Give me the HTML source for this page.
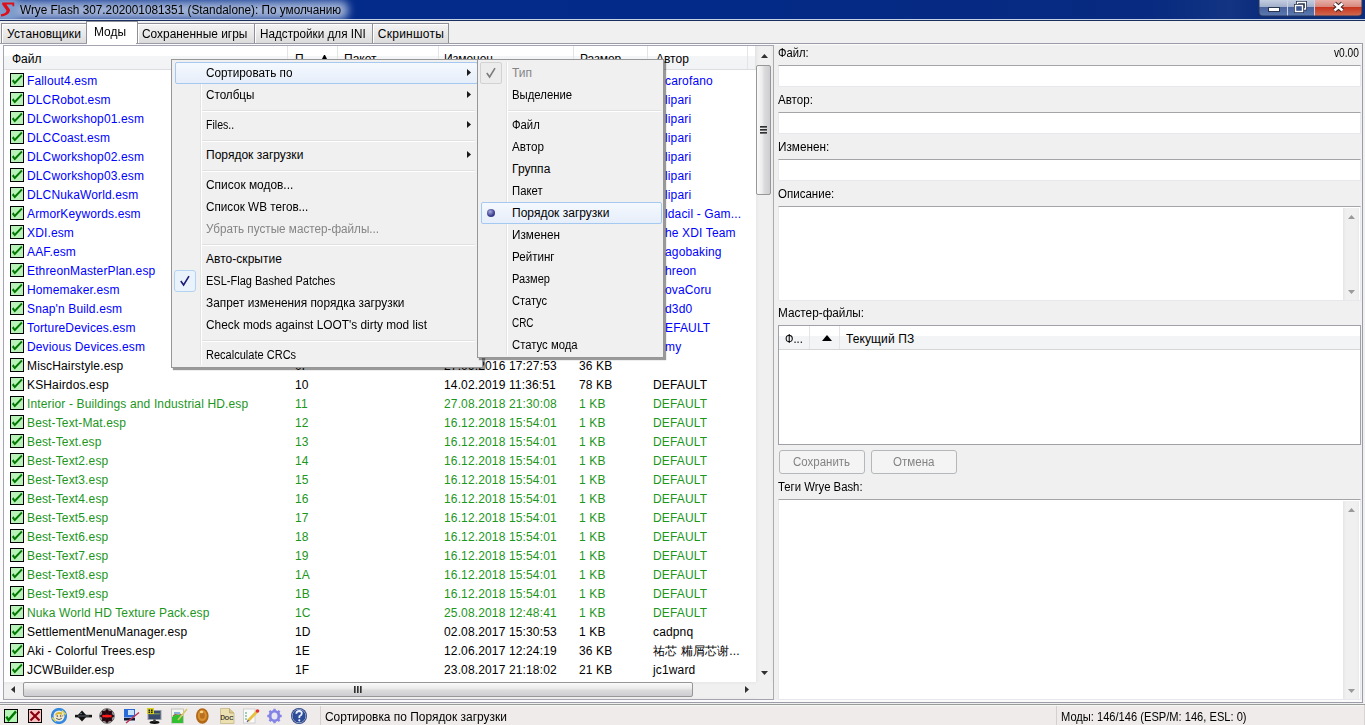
<!DOCTYPE html>
<html><head><meta charset="utf-8"><style>
*{box-sizing:border-box}
html,body{margin:0;padding:0}
body{width:1365px;height:725px;overflow:hidden;position:relative;background:#f0f0f0;font-family:"Liberation Sans",sans-serif;font-size:12px;color:#000}
.a{position:absolute}
.t{position:absolute;white-space:nowrap;line-height:15px}
.cb{position:absolute}
</style></head><body>

<div class="a" style="left:0;top:0;width:1365px;height:19px;overflow:hidden;background:linear-gradient(90deg,#042c8c 0,#032a88 700px,#082a80 1150px,#123482 1230px,#0c2c7c 1258px)">
<div class="a" style="left:-8px;top:0px;width:356px;height:20px;border-radius:8px;background:linear-gradient(180deg,#6a86c0 0,#a2b4d6 35%,#aabada 60%,#8098c8 100%);filter:blur(4px)"></div>
<div class="a" style="left:-6px;top:-2px;width:24px;height:22px;background:#7d9ccc;filter:blur(3px)"></div>
</div>
<div class="a" style="left:0;top:19px;width:1365px;height:1px;background:#c4d0e4"></div>
<div class="a" style="left:0;top:20px;width:1365px;height:1px;background:#1b2f5e"></div>
<div class="t" style="left:19.8px;top:3px;transform:scaleX(0.982);transform-origin:0 0;">Wrye Flash 307.202001081351 (Standalone): По умолчанию</div>
<svg class="a" style="left:0;top:0" width="18" height="18" viewBox="0 0 18 18"><path d="M2.2 2.6 H14.2 V6.2 H12.4 V4.6 H6.4 L9.9 9.4 C10.4 12.6 7.2 15.8 1.2 16.4 L0.8 14.2 C4.4 13.6 6.6 12.4 6.5 10.4 L2.2 4.6 Z" fill="#dc1018"/></svg>

<svg class="a" style="left:1258px;top:0" width="105" height="18" viewBox="0 0 105 18">
<defs>
<linearGradient id="gb" x1="0" y1="0" x2="0" y2="1"><stop offset="0" stop-color="#c4cee0"/><stop offset="0.42" stop-color="#a3b1cc"/><stop offset="0.45" stop-color="#4a629c"/><stop offset="1" stop-color="#5a78b0"/></linearGradient>
<linearGradient id="gr" x1="0" y1="0" x2="0" y2="1"><stop offset="0" stop-color="#e8b0a8"/><stop offset="0.42" stop-color="#d88a80"/><stop offset="0.45" stop-color="#c8321c"/><stop offset="1" stop-color="#d06850"/></linearGradient>
</defs>
<path d="M0.5 0 V12 Q0.5 16.5 5 16.5 H100 Q104.5 16.5 104.5 12 V0" fill="#26365a"/>
<path d="M1.5 0 V12 Q1.5 15.5 5 15.5 H29 V0Z" fill="url(#gb)"/>
<rect x="29" y="0" width="1" height="15.5" fill="#c8d2e4"/>
<rect x="30" y="0" width="26" height="15.5" fill="url(#gb)"/>
<rect x="56" y="0" width="1" height="15.5" fill="#c8d2e4"/>
<path d="M57 0 H103.5 V12 Q103.5 15.5 100 15.5 H57Z" fill="url(#gr)"/>
<rect x="10.5" y="7.5" width="11" height="4" fill="#fff" stroke="#2a3550" stroke-width="1"/>
<path d="M39.5 5 V2.5 H47.5 V9 H45" fill="none" stroke="#2a3550" stroke-width="3"/>
<path d="M39.5 5 V2.5 H47.5 V9 H45" fill="none" stroke="#fff" stroke-width="1.3"/>
<rect x="37.5" y="5.5" width="7" height="6" fill="#3c5490" stroke="#2a3550" stroke-width="3"/>
<rect x="37.5" y="5.5" width="7" height="6" fill="#3c5490" stroke="#fff" stroke-width="1.4"/>
<path d="M76.5 3.5 L84.5 10.5 M84.5 3.5 L76.5 10.5" stroke="#3a2020" stroke-width="4.4"/>
<path d="M76.5 3.5 L84.5 10.5 M84.5 3.5 L76.5 10.5" stroke="#fff" stroke-width="2.6"/>
</svg>
<div class="a" style="left:1px;top:23px;width:86px;height:21px;background:linear-gradient(180deg,#f4f4f4 0,#e8e8e8 50%,#dadada 100%);border:1px solid #8e8f98;border-bottom:none;box-shadow:inset 1px 1px 0 #fff"></div>
<div class="t" style="left:7.0px;top:27px;letter-spacing:0.08px;">Установщики</div>
<div class="a" style="left:86px;top:21px;width:52px;height:24px;background:#fff;border:1px solid #8e8f98;border-bottom:none"></div>
<div class="t" style="left:94.0px;top:25px;transform:scaleX(0.9937);transform-origin:0 0;">Моды</div>
<div class="a" style="left:137px;top:23px;width:118px;height:21px;background:linear-gradient(180deg,#f4f4f4 0,#e8e8e8 50%,#dadada 100%);border:1px solid #8e8f98;border-bottom:none;box-shadow:inset 1px 1px 0 #fff"></div>
<div class="t" style="left:141.8px;top:27px;transform:scaleX(0.9925);transform-origin:0 0;">Сохраненные игры</div>
<div class="a" style="left:254px;top:23px;width:119px;height:21px;background:linear-gradient(180deg,#f4f4f4 0,#e8e8e8 50%,#dadada 100%);border:1px solid #8e8f98;border-bottom:none;box-shadow:inset 1px 1px 0 #fff"></div>
<div class="t" style="left:259.7px;top:27px;transform:scaleX(0.9759);transform-origin:0 0;">Надстройки для INI</div>
<div class="a" style="left:372px;top:23px;width:77px;height:21px;background:linear-gradient(180deg,#f4f4f4 0,#e8e8e8 50%,#dadada 100%);border:1px solid #8e8f98;border-bottom:none;box-shadow:inset 1px 1px 0 #fff"></div>
<div class="t" style="left:377.8px;top:27px;letter-spacing:0.25px;">Скриншоты</div>
<div class="a" style="left:0;top:43px;width:1363px;height:660px;border:1px solid #9c9ca8;border-left:none;background:#f0f0f0;z-index:0"></div>
<div class="a" style="left:0;top:44px;width:3px;height:658px;background:#fbfbfb"></div>
<div class="a" style="left:0;top:44px;width:1362px;height:1px;background:#fbfbfb"></div>
<div class="a" style="left:0;top:700px;width:1362px;height:2px;background:#fbfbfb"></div>
<div class="a" style="left:87px;top:42px;width:49px;height:3px;background:#fff"></div>
<div class="a" style="left:3px;top:45px;width:771px;height:655px;background:#fff;border:1px solid #a5a5b2;border-right-color:#acacac"></div>
<div class="a" style="left:4px;top:46px;width:752px;height:24px;background:linear-gradient(180deg,#fff 0,#fff 10px,#f4f5f7 10px,#f2f3f5 23px,#dcdde0 23px)"></div>
<div class="a" style="left:287px;top:46px;width:1px;height:23px;background:#e3e4e6"></div>
<div class="a" style="left:337px;top:46px;width:1px;height:23px;background:#e3e4e6"></div>
<div class="a" style="left:438px;top:46px;width:1px;height:23px;background:#e3e4e6"></div>
<div class="a" style="left:573px;top:46px;width:1px;height:23px;background:#e3e4e6"></div>
<div class="a" style="left:647px;top:46px;width:1px;height:23px;background:#e3e4e6"></div>
<div class="a" style="left:747px;top:46px;width:1px;height:23px;background:#e3e4e6"></div>
<div class="a" style="left:755px;top:46px;width:1px;height:23px;background:#e3e4e6"></div>
<div class="t" style="left:12px;top:52px">Файл</div>
<div class="t" style="left:295px;top:52px">П</div>
<div class="t" style="left:344px;top:52px">Пакет</div>
<div class="t" style="left:444px;top:52px">Изменен</div>
<div class="t" style="left:580px;top:52px">Размер</div>
<div class="t" style="left:656px;top:52px">Автор</div>
<svg class="a" style="left:322px;top:55px" width="5" height="4"><path d="M0 4 L2 0 L3 0 L5 4Z" fill="#000"/></svg>
<svg class="cb" style="left:10px;top:73px" width="14" height="14" viewBox="0 0 14 14"><rect x="0.5" y="0.5" width="13" height="13" fill="#b8f2b8" stroke="#000" stroke-width="1" shape-rendering="crispEdges"/><path d="M1.9 7.9 L3.6 6.3 L4.8 8.4 L11.3 1.7 L12.5 3.3 L4.7 11.6 Z" fill="#007800"/></svg>
<div class="t" style="left:27px;top:74px;color:#0000ff;letter-spacing:0.14px">Fallout4.esm</div>
<div class="t" style="left:665px;top:74px;color:#0000ff;letter-spacing:0.14px">carofano</div>
<svg class="cb" style="left:10px;top:92px" width="14" height="14" viewBox="0 0 14 14"><rect x="0.5" y="0.5" width="13" height="13" fill="#b8f2b8" stroke="#000" stroke-width="1" shape-rendering="crispEdges"/><path d="M1.9 7.9 L3.6 6.3 L4.8 8.4 L11.3 1.7 L12.5 3.3 L4.7 11.6 Z" fill="#007800"/></svg>
<div class="t" style="left:27px;top:93px;color:#0000ff;letter-spacing:0.14px">DLCRobot.esm</div>
<div class="t" style="left:665px;top:93px;color:#0000ff;letter-spacing:0.14px">lipari</div>
<svg class="cb" style="left:10px;top:111px" width="14" height="14" viewBox="0 0 14 14"><rect x="0.5" y="0.5" width="13" height="13" fill="#b8f2b8" stroke="#000" stroke-width="1" shape-rendering="crispEdges"/><path d="M1.9 7.9 L3.6 6.3 L4.8 8.4 L11.3 1.7 L12.5 3.3 L4.7 11.6 Z" fill="#007800"/></svg>
<div class="t" style="left:27px;top:112px;color:#0000ff;letter-spacing:0.14px">DLCworkshop01.esm</div>
<div class="t" style="left:665px;top:112px;color:#0000ff;letter-spacing:0.14px">lipari</div>
<svg class="cb" style="left:10px;top:130px" width="14" height="14" viewBox="0 0 14 14"><rect x="0.5" y="0.5" width="13" height="13" fill="#b8f2b8" stroke="#000" stroke-width="1" shape-rendering="crispEdges"/><path d="M1.9 7.9 L3.6 6.3 L4.8 8.4 L11.3 1.7 L12.5 3.3 L4.7 11.6 Z" fill="#007800"/></svg>
<div class="t" style="left:27px;top:131px;color:#0000ff;letter-spacing:0.14px">DLCCoast.esm</div>
<div class="t" style="left:665px;top:131px;color:#0000ff;letter-spacing:0.14px">lipari</div>
<svg class="cb" style="left:10px;top:149px" width="14" height="14" viewBox="0 0 14 14"><rect x="0.5" y="0.5" width="13" height="13" fill="#b8f2b8" stroke="#000" stroke-width="1" shape-rendering="crispEdges"/><path d="M1.9 7.9 L3.6 6.3 L4.8 8.4 L11.3 1.7 L12.5 3.3 L4.7 11.6 Z" fill="#007800"/></svg>
<div class="t" style="left:27px;top:150px;color:#0000ff;letter-spacing:0.14px">DLCworkshop02.esm</div>
<div class="t" style="left:665px;top:150px;color:#0000ff;letter-spacing:0.14px">lipari</div>
<svg class="cb" style="left:10px;top:168px" width="14" height="14" viewBox="0 0 14 14"><rect x="0.5" y="0.5" width="13" height="13" fill="#b8f2b8" stroke="#000" stroke-width="1" shape-rendering="crispEdges"/><path d="M1.9 7.9 L3.6 6.3 L4.8 8.4 L11.3 1.7 L12.5 3.3 L4.7 11.6 Z" fill="#007800"/></svg>
<div class="t" style="left:27px;top:169px;color:#0000ff;letter-spacing:0.14px">DLCworkshop03.esm</div>
<div class="t" style="left:665px;top:169px;color:#0000ff;letter-spacing:0.14px">lipari</div>
<svg class="cb" style="left:10px;top:187px" width="14" height="14" viewBox="0 0 14 14"><rect x="0.5" y="0.5" width="13" height="13" fill="#b8f2b8" stroke="#000" stroke-width="1" shape-rendering="crispEdges"/><path d="M1.9 7.9 L3.6 6.3 L4.8 8.4 L11.3 1.7 L12.5 3.3 L4.7 11.6 Z" fill="#007800"/></svg>
<div class="t" style="left:27px;top:188px;color:#0000ff;letter-spacing:0.14px">DLCNukaWorld.esm</div>
<div class="t" style="left:665px;top:188px;color:#0000ff;letter-spacing:0.14px">lipari</div>
<svg class="cb" style="left:10px;top:206px" width="14" height="14" viewBox="0 0 14 14"><rect x="0.5" y="0.5" width="13" height="13" fill="#b8f2b8" stroke="#000" stroke-width="1" shape-rendering="crispEdges"/><path d="M1.9 7.9 L3.6 6.3 L4.8 8.4 L11.3 1.7 L12.5 3.3 L4.7 11.6 Z" fill="#007800"/></svg>
<div class="t" style="left:27px;top:207px;color:#0000ff;letter-spacing:0.14px">ArmorKeywords.esm</div>
<div class="t" style="left:665px;top:207px;color:#0000ff;letter-spacing:0.14px">ldacil - Gam...</div>
<svg class="cb" style="left:10px;top:225px" width="14" height="14" viewBox="0 0 14 14"><rect x="0.5" y="0.5" width="13" height="13" fill="#b8f2b8" stroke="#000" stroke-width="1" shape-rendering="crispEdges"/><path d="M1.9 7.9 L3.6 6.3 L4.8 8.4 L11.3 1.7 L12.5 3.3 L4.7 11.6 Z" fill="#007800"/></svg>
<div class="t" style="left:27px;top:226px;color:#0000ff;letter-spacing:0.14px">XDI.esm</div>
<div class="t" style="left:665px;top:226px;color:#0000ff;letter-spacing:0.14px">he XDI Team</div>
<svg class="cb" style="left:10px;top:244px" width="14" height="14" viewBox="0 0 14 14"><rect x="0.5" y="0.5" width="13" height="13" fill="#b8f2b8" stroke="#000" stroke-width="1" shape-rendering="crispEdges"/><path d="M1.9 7.9 L3.6 6.3 L4.8 8.4 L11.3 1.7 L12.5 3.3 L4.7 11.6 Z" fill="#007800"/></svg>
<div class="t" style="left:27px;top:245px;color:#0000ff;letter-spacing:0.14px">AAF.esm</div>
<div class="t" style="left:665px;top:245px;color:#0000ff;letter-spacing:0.14px">agobaking</div>
<svg class="cb" style="left:10px;top:263px" width="14" height="14" viewBox="0 0 14 14"><rect x="0.5" y="0.5" width="13" height="13" fill="#b8f2b8" stroke="#000" stroke-width="1" shape-rendering="crispEdges"/><path d="M1.9 7.9 L3.6 6.3 L4.8 8.4 L11.3 1.7 L12.5 3.3 L4.7 11.6 Z" fill="#007800"/></svg>
<div class="t" style="left:27px;top:264px;color:#0000ff;letter-spacing:0.14px">EthreonMasterPlan.esp</div>
<div class="t" style="left:665px;top:264px;color:#0000ff;letter-spacing:0.14px">hreon</div>
<svg class="cb" style="left:10px;top:282px" width="14" height="14" viewBox="0 0 14 14"><rect x="0.5" y="0.5" width="13" height="13" fill="#b8f2b8" stroke="#000" stroke-width="1" shape-rendering="crispEdges"/><path d="M1.9 7.9 L3.6 6.3 L4.8 8.4 L11.3 1.7 L12.5 3.3 L4.7 11.6 Z" fill="#007800"/></svg>
<div class="t" style="left:27px;top:283px;color:#0000ff;letter-spacing:0.14px">Homemaker.esm</div>
<div class="t" style="left:665px;top:283px;color:#0000ff;letter-spacing:0.14px">ovaCoru</div>
<svg class="cb" style="left:10px;top:301px" width="14" height="14" viewBox="0 0 14 14"><rect x="0.5" y="0.5" width="13" height="13" fill="#b8f2b8" stroke="#000" stroke-width="1" shape-rendering="crispEdges"/><path d="M1.9 7.9 L3.6 6.3 L4.8 8.4 L11.3 1.7 L12.5 3.3 L4.7 11.6 Z" fill="#007800"/></svg>
<div class="t" style="left:27px;top:302px;color:#0000ff;letter-spacing:0.14px">Snap'n Build.esm</div>
<div class="t" style="left:665px;top:302px;color:#0000ff;letter-spacing:0.14px">d3d0</div>
<svg class="cb" style="left:10px;top:320px" width="14" height="14" viewBox="0 0 14 14"><rect x="0.5" y="0.5" width="13" height="13" fill="#b8f2b8" stroke="#000" stroke-width="1" shape-rendering="crispEdges"/><path d="M1.9 7.9 L3.6 6.3 L4.8 8.4 L11.3 1.7 L12.5 3.3 L4.7 11.6 Z" fill="#007800"/></svg>
<div class="t" style="left:27px;top:321px;color:#0000ff;letter-spacing:0.14px">TortureDevices.esm</div>
<div class="t" style="left:665px;top:321px;color:#0000ff;letter-spacing:0.14px">EFAULT</div>
<svg class="cb" style="left:10px;top:339px" width="14" height="14" viewBox="0 0 14 14"><rect x="0.5" y="0.5" width="13" height="13" fill="#b8f2b8" stroke="#000" stroke-width="1" shape-rendering="crispEdges"/><path d="M1.9 7.9 L3.6 6.3 L4.8 8.4 L11.3 1.7 L12.5 3.3 L4.7 11.6 Z" fill="#007800"/></svg>
<div class="t" style="left:27px;top:340px;color:#0000ff;letter-spacing:0.14px">Devious Devices.esm</div>
<div class="t" style="left:665px;top:340px;color:#0000ff;letter-spacing:0.14px">my</div>
<svg class="cb" style="left:10px;top:358px" width="14" height="14" viewBox="0 0 14 14"><rect x="0.5" y="0.5" width="13" height="13" fill="#b8f2b8" stroke="#000" stroke-width="1" shape-rendering="crispEdges"/><path d="M1.9 7.9 L3.6 6.3 L4.8 8.4 L11.3 1.7 L12.5 3.3 L4.7 11.6 Z" fill="#007800"/></svg>
<div class="t" style="left:27px;top:359px;color:#000000;letter-spacing:0.14px">MiscHairstyle.esp</div>
<div class="t" style="left:295px;top:359px;color:#000000;letter-spacing:0.14px">0F</div>
<div class="t" style="left:444px;top:359px;color:#000000;letter-spacing:0.14px">27.09.2016 17:27:53</div>
<div class="t" style="left:579px;top:359px;color:#000000;letter-spacing:0.14px">36 KB</div>
<svg class="cb" style="left:10px;top:377px" width="14" height="14" viewBox="0 0 14 14"><rect x="0.5" y="0.5" width="13" height="13" fill="#b8f2b8" stroke="#000" stroke-width="1" shape-rendering="crispEdges"/><path d="M1.9 7.9 L3.6 6.3 L4.8 8.4 L11.3 1.7 L12.5 3.3 L4.7 11.6 Z" fill="#007800"/></svg>
<div class="t" style="left:27px;top:378px;color:#000000;letter-spacing:0.14px">KSHairdos.esp</div>
<div class="t" style="left:295px;top:378px;color:#000000;letter-spacing:0.14px">10</div>
<div class="t" style="left:444px;top:378px;color:#000000;letter-spacing:0.14px">14.02.2019 11:36:51</div>
<div class="t" style="left:579px;top:378px;color:#000000;letter-spacing:0.14px">78 KB</div>
<div class="t" style="left:653px;top:378px;color:#000000;letter-spacing:0.14px">DEFAULT</div>
<svg class="cb" style="left:10px;top:396px" width="14" height="14" viewBox="0 0 14 14"><rect x="0.5" y="0.5" width="13" height="13" fill="#b8f2b8" stroke="#000" stroke-width="1" shape-rendering="crispEdges"/><path d="M1.9 7.9 L3.6 6.3 L4.8 8.4 L11.3 1.7 L12.5 3.3 L4.7 11.6 Z" fill="#007800"/></svg>
<div class="t" style="left:27px;top:397px;color:#1c961c;letter-spacing:0.14px">Interior - Buildings and Industrial HD.esp</div>
<div class="t" style="left:295px;top:397px;color:#1c961c;letter-spacing:0.14px">11</div>
<div class="t" style="left:444px;top:397px;color:#1c961c;letter-spacing:0.14px">27.08.2018 21:30:08</div>
<div class="t" style="left:579px;top:397px;color:#1c961c;letter-spacing:0.14px">1 KB</div>
<div class="t" style="left:653px;top:397px;color:#1c961c;letter-spacing:0.14px">DEFAULT</div>
<svg class="cb" style="left:10px;top:415px" width="14" height="14" viewBox="0 0 14 14"><rect x="0.5" y="0.5" width="13" height="13" fill="#b8f2b8" stroke="#000" stroke-width="1" shape-rendering="crispEdges"/><path d="M1.9 7.9 L3.6 6.3 L4.8 8.4 L11.3 1.7 L12.5 3.3 L4.7 11.6 Z" fill="#007800"/></svg>
<div class="t" style="left:27px;top:416px;color:#1c961c;letter-spacing:0.14px">Best-Text-Mat.esp</div>
<div class="t" style="left:295px;top:416px;color:#1c961c;letter-spacing:0.14px">12</div>
<div class="t" style="left:444px;top:416px;color:#1c961c;letter-spacing:0.14px">16.12.2018 15:54:01</div>
<div class="t" style="left:579px;top:416px;color:#1c961c;letter-spacing:0.14px">1 KB</div>
<div class="t" style="left:653px;top:416px;color:#1c961c;letter-spacing:0.14px">DEFAULT</div>
<svg class="cb" style="left:10px;top:434px" width="14" height="14" viewBox="0 0 14 14"><rect x="0.5" y="0.5" width="13" height="13" fill="#b8f2b8" stroke="#000" stroke-width="1" shape-rendering="crispEdges"/><path d="M1.9 7.9 L3.6 6.3 L4.8 8.4 L11.3 1.7 L12.5 3.3 L4.7 11.6 Z" fill="#007800"/></svg>
<div class="t" style="left:27px;top:435px;color:#1c961c;letter-spacing:0.14px">Best-Text.esp</div>
<div class="t" style="left:295px;top:435px;color:#1c961c;letter-spacing:0.14px">13</div>
<div class="t" style="left:444px;top:435px;color:#1c961c;letter-spacing:0.14px">16.12.2018 15:54:01</div>
<div class="t" style="left:579px;top:435px;color:#1c961c;letter-spacing:0.14px">1 KB</div>
<div class="t" style="left:653px;top:435px;color:#1c961c;letter-spacing:0.14px">DEFAULT</div>
<svg class="cb" style="left:10px;top:453px" width="14" height="14" viewBox="0 0 14 14"><rect x="0.5" y="0.5" width="13" height="13" fill="#b8f2b8" stroke="#000" stroke-width="1" shape-rendering="crispEdges"/><path d="M1.9 7.9 L3.6 6.3 L4.8 8.4 L11.3 1.7 L12.5 3.3 L4.7 11.6 Z" fill="#007800"/></svg>
<div class="t" style="left:27px;top:454px;color:#1c961c;letter-spacing:0.14px">Best-Text2.esp</div>
<div class="t" style="left:295px;top:454px;color:#1c961c;letter-spacing:0.14px">14</div>
<div class="t" style="left:444px;top:454px;color:#1c961c;letter-spacing:0.14px">16.12.2018 15:54:01</div>
<div class="t" style="left:579px;top:454px;color:#1c961c;letter-spacing:0.14px">1 KB</div>
<div class="t" style="left:653px;top:454px;color:#1c961c;letter-spacing:0.14px">DEFAULT</div>
<svg class="cb" style="left:10px;top:472px" width="14" height="14" viewBox="0 0 14 14"><rect x="0.5" y="0.5" width="13" height="13" fill="#b8f2b8" stroke="#000" stroke-width="1" shape-rendering="crispEdges"/><path d="M1.9 7.9 L3.6 6.3 L4.8 8.4 L11.3 1.7 L12.5 3.3 L4.7 11.6 Z" fill="#007800"/></svg>
<div class="t" style="left:27px;top:473px;color:#1c961c;letter-spacing:0.14px">Best-Text3.esp</div>
<div class="t" style="left:295px;top:473px;color:#1c961c;letter-spacing:0.14px">15</div>
<div class="t" style="left:444px;top:473px;color:#1c961c;letter-spacing:0.14px">16.12.2018 15:54:01</div>
<div class="t" style="left:579px;top:473px;color:#1c961c;letter-spacing:0.14px">1 KB</div>
<div class="t" style="left:653px;top:473px;color:#1c961c;letter-spacing:0.14px">DEFAULT</div>
<svg class="cb" style="left:10px;top:491px" width="14" height="14" viewBox="0 0 14 14"><rect x="0.5" y="0.5" width="13" height="13" fill="#b8f2b8" stroke="#000" stroke-width="1" shape-rendering="crispEdges"/><path d="M1.9 7.9 L3.6 6.3 L4.8 8.4 L11.3 1.7 L12.5 3.3 L4.7 11.6 Z" fill="#007800"/></svg>
<div class="t" style="left:27px;top:492px;color:#1c961c;letter-spacing:0.14px">Best-Text4.esp</div>
<div class="t" style="left:295px;top:492px;color:#1c961c;letter-spacing:0.14px">16</div>
<div class="t" style="left:444px;top:492px;color:#1c961c;letter-spacing:0.14px">16.12.2018 15:54:01</div>
<div class="t" style="left:579px;top:492px;color:#1c961c;letter-spacing:0.14px">1 KB</div>
<div class="t" style="left:653px;top:492px;color:#1c961c;letter-spacing:0.14px">DEFAULT</div>
<svg class="cb" style="left:10px;top:510px" width="14" height="14" viewBox="0 0 14 14"><rect x="0.5" y="0.5" width="13" height="13" fill="#b8f2b8" stroke="#000" stroke-width="1" shape-rendering="crispEdges"/><path d="M1.9 7.9 L3.6 6.3 L4.8 8.4 L11.3 1.7 L12.5 3.3 L4.7 11.6 Z" fill="#007800"/></svg>
<div class="t" style="left:27px;top:511px;color:#1c961c;letter-spacing:0.14px">Best-Text5.esp</div>
<div class="t" style="left:295px;top:511px;color:#1c961c;letter-spacing:0.14px">17</div>
<div class="t" style="left:444px;top:511px;color:#1c961c;letter-spacing:0.14px">16.12.2018 15:54:01</div>
<div class="t" style="left:579px;top:511px;color:#1c961c;letter-spacing:0.14px">1 KB</div>
<div class="t" style="left:653px;top:511px;color:#1c961c;letter-spacing:0.14px">DEFAULT</div>
<svg class="cb" style="left:10px;top:529px" width="14" height="14" viewBox="0 0 14 14"><rect x="0.5" y="0.5" width="13" height="13" fill="#b8f2b8" stroke="#000" stroke-width="1" shape-rendering="crispEdges"/><path d="M1.9 7.9 L3.6 6.3 L4.8 8.4 L11.3 1.7 L12.5 3.3 L4.7 11.6 Z" fill="#007800"/></svg>
<div class="t" style="left:27px;top:530px;color:#1c961c;letter-spacing:0.14px">Best-Text6.esp</div>
<div class="t" style="left:295px;top:530px;color:#1c961c;letter-spacing:0.14px">18</div>
<div class="t" style="left:444px;top:530px;color:#1c961c;letter-spacing:0.14px">16.12.2018 15:54:01</div>
<div class="t" style="left:579px;top:530px;color:#1c961c;letter-spacing:0.14px">1 KB</div>
<div class="t" style="left:653px;top:530px;color:#1c961c;letter-spacing:0.14px">DEFAULT</div>
<svg class="cb" style="left:10px;top:548px" width="14" height="14" viewBox="0 0 14 14"><rect x="0.5" y="0.5" width="13" height="13" fill="#b8f2b8" stroke="#000" stroke-width="1" shape-rendering="crispEdges"/><path d="M1.9 7.9 L3.6 6.3 L4.8 8.4 L11.3 1.7 L12.5 3.3 L4.7 11.6 Z" fill="#007800"/></svg>
<div class="t" style="left:27px;top:549px;color:#1c961c;letter-spacing:0.14px">Best-Text7.esp</div>
<div class="t" style="left:295px;top:549px;color:#1c961c;letter-spacing:0.14px">19</div>
<div class="t" style="left:444px;top:549px;color:#1c961c;letter-spacing:0.14px">16.12.2018 15:54:01</div>
<div class="t" style="left:579px;top:549px;color:#1c961c;letter-spacing:0.14px">1 KB</div>
<div class="t" style="left:653px;top:549px;color:#1c961c;letter-spacing:0.14px">DEFAULT</div>
<svg class="cb" style="left:10px;top:567px" width="14" height="14" viewBox="0 0 14 14"><rect x="0.5" y="0.5" width="13" height="13" fill="#b8f2b8" stroke="#000" stroke-width="1" shape-rendering="crispEdges"/><path d="M1.9 7.9 L3.6 6.3 L4.8 8.4 L11.3 1.7 L12.5 3.3 L4.7 11.6 Z" fill="#007800"/></svg>
<div class="t" style="left:27px;top:568px;color:#1c961c;letter-spacing:0.14px">Best-Text8.esp</div>
<div class="t" style="left:295px;top:568px;color:#1c961c;letter-spacing:0.14px">1A</div>
<div class="t" style="left:444px;top:568px;color:#1c961c;letter-spacing:0.14px">16.12.2018 15:54:01</div>
<div class="t" style="left:579px;top:568px;color:#1c961c;letter-spacing:0.14px">1 KB</div>
<div class="t" style="left:653px;top:568px;color:#1c961c;letter-spacing:0.14px">DEFAULT</div>
<svg class="cb" style="left:10px;top:586px" width="14" height="14" viewBox="0 0 14 14"><rect x="0.5" y="0.5" width="13" height="13" fill="#b8f2b8" stroke="#000" stroke-width="1" shape-rendering="crispEdges"/><path d="M1.9 7.9 L3.6 6.3 L4.8 8.4 L11.3 1.7 L12.5 3.3 L4.7 11.6 Z" fill="#007800"/></svg>
<div class="t" style="left:27px;top:587px;color:#1c961c;letter-spacing:0.14px">Best-Text9.esp</div>
<div class="t" style="left:295px;top:587px;color:#1c961c;letter-spacing:0.14px">1B</div>
<div class="t" style="left:444px;top:587px;color:#1c961c;letter-spacing:0.14px">16.12.2018 15:54:01</div>
<div class="t" style="left:579px;top:587px;color:#1c961c;letter-spacing:0.14px">1 KB</div>
<div class="t" style="left:653px;top:587px;color:#1c961c;letter-spacing:0.14px">DEFAULT</div>
<svg class="cb" style="left:10px;top:605px" width="14" height="14" viewBox="0 0 14 14"><rect x="0.5" y="0.5" width="13" height="13" fill="#b8f2b8" stroke="#000" stroke-width="1" shape-rendering="crispEdges"/><path d="M1.9 7.9 L3.6 6.3 L4.8 8.4 L11.3 1.7 L12.5 3.3 L4.7 11.6 Z" fill="#007800"/></svg>
<div class="t" style="left:27px;top:606px;color:#1c961c;letter-spacing:0.14px">Nuka World HD Texture Pack.esp</div>
<div class="t" style="left:295px;top:606px;color:#1c961c;letter-spacing:0.14px">1C</div>
<div class="t" style="left:444px;top:606px;color:#1c961c;letter-spacing:0.14px">25.08.2018 12:48:41</div>
<div class="t" style="left:579px;top:606px;color:#1c961c;letter-spacing:0.14px">1 KB</div>
<div class="t" style="left:653px;top:606px;color:#1c961c;letter-spacing:0.14px">DEFAULT</div>
<svg class="cb" style="left:10px;top:624px" width="14" height="14" viewBox="0 0 14 14"><rect x="0.5" y="0.5" width="13" height="13" fill="#b8f2b8" stroke="#000" stroke-width="1" shape-rendering="crispEdges"/><path d="M1.9 7.9 L3.6 6.3 L4.8 8.4 L11.3 1.7 L12.5 3.3 L4.7 11.6 Z" fill="#007800"/></svg>
<div class="t" style="left:27px;top:625px;color:#000000;letter-spacing:0.14px">SettlementMenuManager.esp</div>
<div class="t" style="left:295px;top:625px;color:#000000;letter-spacing:0.14px">1D</div>
<div class="t" style="left:444px;top:625px;color:#000000;letter-spacing:0.14px">02.08.2017 15:30:53</div>
<div class="t" style="left:579px;top:625px;color:#000000;letter-spacing:0.14px">1 KB</div>
<div class="t" style="left:653px;top:625px;color:#000000;letter-spacing:0.14px">cadpnq</div>
<svg class="cb" style="left:10px;top:643px" width="14" height="14" viewBox="0 0 14 14"><rect x="0.5" y="0.5" width="13" height="13" fill="#b8f2b8" stroke="#000" stroke-width="1" shape-rendering="crispEdges"/><path d="M1.9 7.9 L3.6 6.3 L4.8 8.4 L11.3 1.7 L12.5 3.3 L4.7 11.6 Z" fill="#007800"/></svg>
<div class="t" style="left:27px;top:644px;color:#000000;letter-spacing:0.14px">Aki - Colorful Trees.esp</div>
<div class="t" style="left:295px;top:644px;color:#000000;letter-spacing:0.14px">1E</div>
<div class="t" style="left:444px;top:644px;color:#000000;letter-spacing:0.14px">12.06.2017 12:24:19</div>
<div class="t" style="left:579px;top:644px;color:#000000;letter-spacing:0.14px">36 KB</div>
<div class="t" style="left:653px;top:644px;color:#000000;letter-spacing:0.14px">祐芯 糒屑芯谢...</div>
<svg class="cb" style="left:10px;top:662px" width="14" height="14" viewBox="0 0 14 14"><rect x="0.5" y="0.5" width="13" height="13" fill="#b8f2b8" stroke="#000" stroke-width="1" shape-rendering="crispEdges"/><path d="M1.9 7.9 L3.6 6.3 L4.8 8.4 L11.3 1.7 L12.5 3.3 L4.7 11.6 Z" fill="#007800"/></svg>
<div class="t" style="left:27px;top:663px;color:#000000;letter-spacing:0.14px">JCWBuilder.esp</div>
<div class="t" style="left:295px;top:663px;color:#000000;letter-spacing:0.14px">1F</div>
<div class="t" style="left:444px;top:663px;color:#000000;letter-spacing:0.14px">23.08.2017 21:18:02</div>
<div class="t" style="left:579px;top:663px;color:#000000;letter-spacing:0.14px">21 KB</div>
<div class="t" style="left:653px;top:663px;color:#000000;letter-spacing:0.14px">jc1ward</div>
<div class="a" style="left:756px;top:46px;width:17px;height:636px;background:linear-gradient(90deg,#e8e8e8,#f0f0f0 3px,#f0f0f0 14px,#ececec)"></div>
<svg class="a" style="left:761px;top:54px" width="7" height="4"><path d="M0 4 L3.5 0 L7 4Z" fill="#303030"/></svg>
<div class="a" style="left:756px;top:65px;width:15px;height:130px;border:1px solid #979797;border-radius:2px;background:linear-gradient(90deg,#fafafa 0,#ececec 40%,#dcdcdc 55%,#cdcdd2 100%)"></div>
<div class="a" style="left:760px;top:126px;width:7px;height:1px;background:#303030;box-shadow:0 1px 0 #707070,0 3px 0 #303030,0 4px 0 #707070,0 6px 0 #303030,0 7px 0 #707070"></div>
<svg class="a" style="left:761px;top:671px" width="7" height="4"><path d="M0 0 L3.5 4 L7 0Z" fill="#303030"/></svg>
<div class="a" style="left:4px;top:682px;width:769px;height:17px;background:linear-gradient(180deg,#e8e8e8,#f0f0f0 3px,#f0f0f0 14px,#ececec)"></div>
<svg class="a" style="left:11px;top:686px" width="4" height="7"><path d="M4 0 L0 3.5 L4 7Z" fill="#303030"/></svg>
<div class="a" style="left:23px;top:682px;width:670px;height:15px;border:1px solid #979797;border-radius:2px;background:linear-gradient(180deg,#fafafa 0,#ececec 40%,#dcdcdc 55%,#cdcdd2 100%)"></div>
<div class="a" style="left:354px;top:686px;width:1px;height:7px;background:#303030;box-shadow:1px 0 0 #707070,3px 0 0 #303030,4px 0 0 #707070,6px 0 0 #303030,7px 0 0 #707070"></div>
<svg class="a" style="left:745px;top:686px" width="4" height="7"><path d="M0 0 L4 3.5 L0 7Z" fill="#303030"/></svg>
<div class="a" style="left:756px;top:682px;width:17px;height:17px;background:#f0f0f0"></div>
<div class="t" style="left:778.0px;top:46px;transform:scaleX(0.9333);transform-origin:0 0;">Файл:</div>
<div class="t" style="left:1333.8px;top:46px;transform:scaleX(0.85);transform-origin:0 0;">v0.00</div>
<div class="a" style="left:778px;top:65px;width:583px;height:22px;background:#fff;border:1px solid #e6e8ec;border-top-color:#a4a4a8;border-left-color:#e8e8ea"></div>
<div class="t" style="left:778.0px;top:93px;transform:scaleX(0.9639);transform-origin:0 0;">Автор:</div>
<div class="a" style="left:778px;top:112px;width:583px;height:22px;background:#fff;border:1px solid #e6e8ec;border-top-color:#a4a4a8;border-left-color:#e8e8ea"></div>
<div class="t" style="left:778.0px;top:140px;transform:scaleX(0.9808);transform-origin:0 0;">Изменен:</div>
<div class="a" style="left:778px;top:159px;width:583px;height:22px;background:#fff;border:1px solid #e6e8ec;border-top-color:#a4a4a8;border-left-color:#e8e8ea"></div>
<div class="t" style="left:778.0px;top:187px;transform:scaleX(0.961);transform-origin:0 0;">Описание:</div>
<div class="a" style="left:778px;top:206px;width:583px;height:95px;background:#fff;border:1px solid #e6e8ec;border-top-color:#a4a4a8;border-left-color:#e8e8ea"></div>
<div class="t" style="left:778.0px;top:306px;transform:scaleX(0.9807);transform-origin:0 0;">Мастер-файлы:</div>
<div class="a" style="left:778px;top:325px;width:583px;height:120px;background:#fff;border:1px solid #a0a0a8"></div>
<div class="a" style="left:779px;top:326px;width:581px;height:24px;background:linear-gradient(180deg,#fff 0,#fff 10px,#f3f4f6 10px,#f3f4f6 23px,#d5d5d5 23px)"></div>
<div class="a" style="left:809px;top:326px;width:1px;height:23px;background:#e3e4e6"></div>
<div class="a" style="left:839px;top:326px;width:1px;height:23px;background:#e3e4e6"></div>
<div class="t" style="left:785.3px;top:332px;transform:scaleX(0.9263);transform-origin:0 0;">Ф...</div>
<svg class="a" style="left:822px;top:335px" width="10" height="6"><path d="M0 6 L5 0 L10 6Z" fill="#000"/></svg>
<div class="t" style="left:845.9px;top:332px;letter-spacing:0.122px;">Текущий ПЗ</div>
<div class="a" style="left:779px;top:450px;width:86px;height:24px;border:1px solid #b4b8ba;border-radius:3px;background:#f4f4f4"></div>
<div class="t" style="left:792.7px;top:455px;transform:scaleX(0.9567);transform-origin:0 0;color:#838383">Сохранить</div>
<div class="a" style="left:871px;top:450px;width:86px;height:24px;border:1px solid #b4b8ba;border-radius:3px;background:#f4f4f4"></div>
<div class="t" style="left:892.5px;top:455px;transform:scaleX(0.9628);transform-origin:0 0;color:#838383">Отмена</div>
<div class="t" style="left:778.0px;top:480px;transform:scaleX(0.9444);transform-origin:0 0;">Теги Wrye Bash:</div>
<div class="a" style="left:778px;top:499px;width:583px;height:201px;background:#fff;border:1px solid #e6e8ec;border-top-color:#a4a4a8;border-left-color:#e8e8ea"></div>
<div class="a" style="left:1343px;top:208px;width:16px;height:92px;background:linear-gradient(90deg,#e6e6e6,#f0f0f0 3px,#f0f0f0 13px,#ebebeb)"></div>
<svg class="a" style="left:1348px;top:215px" width="7" height="4"><path d="M0 4 L3.5 0 L7 4Z" fill="#9a9a9a"/></svg>
<svg class="a" style="left:1348px;top:290px" width="7" height="4"><path d="M0 0 L3.5 4 L7 0Z" fill="#9a9a9a"/></svg>
<div class="a" style="left:1343px;top:501px;width:16px;height:198px;background:linear-gradient(90deg,#e6e6e6,#f0f0f0 3px,#f0f0f0 13px,#ebebeb)"></div>
<svg class="a" style="left:1348px;top:508px" width="7" height="4"><path d="M0 4 L3.5 0 L7 4Z" fill="#9a9a9a"/></svg>
<svg class="a" style="left:1348px;top:689px" width="7" height="4"><path d="M0 0 L3.5 4 L7 0Z" fill="#9a9a9a"/></svg>
<div class="a" style="left:0;top:704px;width:1365px;height:21px;background:#efebea;border-top:1px solid #9a9c9a"></div>
<div class="a" style="left:0;top:705px;width:1365px;height:1px;background:#f8f6f6"></div>
<div class="a" style="left:1364px;top:705px;width:1px;height:20px;background:#d8d4d4"></div>
<div class="a" style="left:320px;top:706px;width:1px;height:19px;background:#d5d0d0"></div>
<div class="a" style="left:1056px;top:706px;width:1px;height:19px;background:#d5d0d0"></div>
<div class="t" style="left:325.3px;top:710px;transform:scaleX(0.9945);transform-origin:0 0;">Сортировка по Порядок загрузки</div>
<div class="t" style="left:1060.7px;top:710px;transform:scaleX(0.9265);transform-origin:0 0;">Моды: 146/146 (ESP/M: 146, ESL: 0)</div>
<div class="a" style="left:171px;top:59px;width:312px;height:309px;background:#f0f0f0;border:1px solid #979797;box-shadow:2px 2px 1px rgba(0,0,0,0.4);z-index:5"></div><div class="a" style="left:200px;top:62px;width:1px;height:303px;background:#e2e3e3;box-shadow:1px 0 0 #fff;z-index:5"></div>
<div class="a" style="z-index:6;left:175px;top:62px;width:303px;height:22px;border:1px solid #a4c8f0;border-radius:2px;background:linear-gradient(180deg,#f5f9fe,#e6eefa)"></div>
<div class="t" style="z-index:6;left:206px;top:66px;color:#000;transform:scaleX(0.9809);transform-origin:0 0">Сортировать по</div>
<svg class="a" style="z-index:6;left:467px;top:69px" width="4" height="7"><path d="M0 0 L4 3.5 L0 7Z" fill="#1a1a1a"/></svg>
<div class="t" style="z-index:6;left:206px;top:88px;color:#000;transform:scaleX(0.972);transform-origin:0 0">Столбцы</div>
<svg class="a" style="z-index:6;left:467px;top:91px" width="4" height="7"><path d="M0 0 L4 3.5 L0 7Z" fill="#1a1a1a"/></svg>
<div class="a" style="z-index:6;left:202px;top:110px;width:273px;height:1px;background:#e0e0e0;box-shadow:0 1px 0 #fff"></div>
<div class="t" style="z-index:6;left:206px;top:118px;color:#000;transform:scaleX(0.8812);transform-origin:0 0">Files..</div>
<svg class="a" style="z-index:6;left:467px;top:121px" width="4" height="7"><path d="M0 0 L4 3.5 L0 7Z" fill="#1a1a1a"/></svg>
<div class="a" style="z-index:6;left:202px;top:140px;width:273px;height:1px;background:#e0e0e0;box-shadow:0 1px 0 #fff"></div>
<div class="t" style="z-index:6;left:206px;top:148px;color:#000;letter-spacing:0.013px">Порядок загрузки</div>
<svg class="a" style="z-index:6;left:467px;top:151px" width="4" height="7"><path d="M0 0 L4 3.5 L0 7Z" fill="#1a1a1a"/></svg>
<div class="a" style="z-index:6;left:202px;top:170px;width:273px;height:1px;background:#e0e0e0;box-shadow:0 1px 0 #fff"></div>
<div class="t" style="z-index:6;left:206px;top:178px;color:#000;transform:scaleX(0.992);transform-origin:0 0">Список модов...</div>
<div class="t" style="z-index:6;left:206px;top:200px;color:#000;transform:scaleX(0.9733);transform-origin:0 0">Список WB тегов...</div>
<div class="t" style="z-index:6;left:206px;top:222px;color:#858585;transform:scaleX(0.9757);transform-origin:0 0">Убрать пустые мастер-файлы...</div>
<div class="a" style="z-index:6;left:202px;top:244px;width:273px;height:1px;background:#e0e0e0;box-shadow:0 1px 0 #fff"></div>
<div class="t" style="z-index:6;left:206px;top:252px;color:#000;letter-spacing:0.036px">Авто-скрытие</div>
<div class="a" style="z-index:6;left:174px;top:270px;width:22px;height:22px;border:1px solid #b4d2f2;border-radius:3px;background:#eaf2fb"></div>
<svg class="a" style="z-index:6;left:179px;top:275px" width="12" height="12" viewBox="0 0 12 12"><path d="M1.8 6 L4.6 10 L10 1.2" fill="none" stroke="#1c1c78" stroke-width="1.6"/></svg>
<div class="t" style="z-index:6;left:206px;top:274px;color:#000;transform:scaleX(0.9184);transform-origin:0 0">ESL-Flag Bashed Patches</div>
<div class="t" style="z-index:6;left:206px;top:296px;color:#000;transform:scaleX(0.9871);transform-origin:0 0">Запрет изменения порядка загрузки</div>
<div class="t" style="z-index:6;left:206px;top:318px;color:#000;transform:scaleX(0.9879);transform-origin:0 0">Check mods against LOOT's dirty mod list</div>
<div class="a" style="z-index:6;left:202px;top:340px;width:273px;height:1px;background:#e0e0e0;box-shadow:0 1px 0 #fff"></div>
<div class="t" style="z-index:6;left:206px;top:348px;color:#000;transform:scaleX(0.9194);transform-origin:0 0">Recalculate CRCs</div>
<div class="a" style="left:477px;top:59px;width:187px;height:299px;background:#f0f0f0;border:1px solid #979797;box-shadow:2px 2px 1px rgba(0,0,0,0.4);z-index:7"></div><div class="a" style="left:506px;top:62px;width:1px;height:293px;background:#e2e3e3;box-shadow:1px 0 0 #fff;z-index:7"></div>
<div class="a" style="z-index:8;left:480px;top:62px;width:22px;height:22px;border:1px solid #d2d2d2;border-radius:2px;background:#ececec"></div>
<svg class="a" style="z-index:8;left:485px;top:67px" width="12" height="12" viewBox="0 0 12 12"><path d="M1.8 6 L4.6 10 L10 1.2" fill="none" stroke="#7c7c7c" stroke-width="1.6"/></svg>
<div class="t" style="z-index:8;left:512px;top:66px;color:#858585;letter-spacing:0.05px">Тип</div>
<div class="t" style="z-index:8;left:512px;top:88px;color:#000;transform:scaleX(0.9453);transform-origin:0 0">Выделение</div>
<div class="a" style="z-index:8;left:508px;top:110px;width:153px;height:1px;background:#e0e0e0;box-shadow:0 1px 0 #fff"></div>
<div class="t" style="z-index:8;left:512px;top:118px;color:#000;transform:scaleX(0.94);transform-origin:0 0">Файл</div>
<div class="t" style="z-index:8;left:512px;top:140px;color:#000;transform:scaleX(0.9727);transform-origin:0 0">Автор</div>
<div class="t" style="z-index:8;left:512px;top:162px;color:#000;letter-spacing:0.06px">Группа</div>
<div class="t" style="z-index:8;left:512px;top:184px;color:#000;transform:scaleX(0.9424);transform-origin:0 0">Пакет</div>
<div class="a" style="z-index:8;left:481px;top:202px;width:181px;height:22px;border:1px solid #a4c8f0;border-radius:2px;background:linear-gradient(180deg,#f5f9fe,#e6eefa)"></div>
<div class="a" style="z-index:8;left:487px;top:209px;width:8px;height:8px;border-radius:50%;background:radial-gradient(circle at 40% 35%,#a8acdc,#3a3c90 60%,#282a70)"></div>
<div class="t" style="z-index:8;left:512px;top:206px;color:#000;letter-spacing:0.013px">Порядок загрузки</div>
<div class="t" style="z-index:8;left:512px;top:228px;color:#000;transform:scaleX(0.9796);transform-origin:0 0">Изменен</div>
<div class="t" style="z-index:8;left:512px;top:250px;color:#000;transform:scaleX(0.9667);transform-origin:0 0">Рейтинг</div>
<div class="t" style="z-index:8;left:512px;top:272px;color:#000;transform:scaleX(0.9214);transform-origin:0 0">Размер</div>
<div class="t" style="z-index:8;left:512px;top:294px;color:#000;transform:scaleX(0.9237);transform-origin:0 0">Статус</div>
<div class="t" style="z-index:8;left:512px;top:316px;color:#000;transform:scaleX(0.8269);transform-origin:0 0">CRC</div>
<div class="t" style="z-index:8;left:512px;top:338px;color:#000;transform:scaleX(0.9429);transform-origin:0 0">Статус мода</div>
<div class="a" style="left:4px;top:709px;width:14px;height:14px;border:1px solid #000;background:#b4f5b4"></div>
<svg class="a" style="left:4px;top:709px" width="14" height="14" viewBox="0 0 14 14"><path d="M2.3 7.6 L4.5 11 L12 2.4" fill="none" stroke="#007a00" stroke-width="2.4"/></svg>
<div class="a" style="left:28px;top:709px;width:14px;height:14px;border:1px solid #000;background:#f8c4c4"></div>
<svg class="a" style="left:28px;top:709px" width="14" height="14" viewBox="0 0 14 14"><path d="M2.5 2.5 L11.5 11.5 M11.5 2.5 L2.5 11.5" fill="none" stroke="#8a0010" stroke-width="2.2"/></svg>
<svg class="a" style="left:51px;top:708px" width="16" height="16" viewBox="0 0 16 16">
<circle cx="8" cy="8" r="6.8" fill="none" stroke="#3388dd" stroke-width="2.6"/>
<path d="M11 2.5 L14.8 6.5 M1.2 9.5 L5 13.5" stroke="#e0d850" stroke-width="1.4"/>
<circle cx="8" cy="8.2" r="4.6" fill="#efe6cc"/>
<path d="M4 6.5 Q5.5 2.6 11.5 4.6 L10.5 7 Q7.5 5 4.8 7.5Z" fill="#d8b828"/>
<circle cx="6.3" cy="8" r="0.8" fill="#404040"/><circle cx="9.6" cy="8" r="0.8" fill="#404040"/>
<path d="M5.2 10.4 Q8 12.8 10.8 10.4" fill="none" stroke="#505050" stroke-width="0.9"/>
<path d="M10.8 8.5 L12.5 7" stroke="#c09020" stroke-width="1"/>
</svg>
<svg class="a" style="left:75px;top:710px" width="17" height="13" viewBox="0 0 17 13">
<path d="M7 0.5 L12 6 L7 11.5 L2 6Z" fill="#111"/>
<rect x="0" y="4.8" width="17" height="2.6" fill="#151515"/>
<path d="M3 6 H14" stroke="#8a9aa8" stroke-width="0.6"/>
<circle cx="6" cy="3.5" r="0.8" fill="#6a8aa0"/>
</svg>
<svg class="a" style="left:99px;top:708px" width="16" height="16" viewBox="0 0 16 16">
<circle cx="8" cy="8" r="7.3" fill="#b8b8b8" stroke="#606060" stroke-width="1"/>
<circle cx="8" cy="8" r="5.9" fill="#3c0c18"/>
<path d="M8 1.2 V14.8 M1.2 8 H14.8 M3.2 3.2 L12.8 12.8 M12.8 3.2 L3.2 12.8" stroke="#200810" stroke-width="2.2"/>
<circle cx="8" cy="8" r="2.4" fill="#5a1020"/>
<rect x="3.2" y="7" width="9.6" height="2.2" rx="1" fill="#ff1818"/>
</svg>
<svg class="a" style="left:123px;top:708px" width="17" height="16" viewBox="0 0 17 16">
<rect x="1" y="1" width="11" height="8.5" fill="#2a6ad8"/>
<rect x="5" y="2" width="6" height="5" fill="#c8e0f8"/>
<rect x="1" y="10" width="11" height="2.5" fill="#101830"/>
<rect x="1" y="13" width="11" height="2" fill="#e8eef8"/>
<path d="M3 15 L16 4.5" stroke="#c03050" stroke-width="1.5"/>
</svg>
<svg class="a" style="left:146px;top:708px" width="17" height="16" viewBox="0 0 17 16">
<rect x="2" y="2.5" width="13" height="9" fill="#3a4a6a" stroke="#9aa0a8" stroke-width="1"/>
<rect x="3.2" y="5" width="10.5" height="1.5" fill="#6a8a5a"/>
<rect x="1" y="0" width="7" height="6" fill="#d8d020"/>
<rect x="2.5" y="1.5" width="1.6" height="1.6" fill="#202010"/><rect x="5" y="1.5" width="1.6" height="1.6" fill="#202010"/><rect x="2.5" y="3.5" width="1.6" height="1.6" fill="#202010"/><rect x="5" y="3.5" width="1.6" height="1.6" fill="#202010"/>
<ellipse cx="8.5" cy="14.3" rx="5" ry="1.6" fill="#111"/>
<rect x="7.3" y="11.5" width="2.4" height="2.5" fill="#333"/>
</svg>
<svg class="a" style="left:171px;top:708px" width="17" height="16" viewBox="0 0 17 16">
<rect x="0.5" y="1" width="12" height="14" fill="#f4f4f0" stroke="#b8b8b0" stroke-width="0.8"/>
<path d="M1 9 Q5 5 12 8 V15 H1Z" fill="#30c030"/>
<path d="M2 8 Q6 4.5 11 7" fill="none" stroke="#907040" stroke-width="1.2"/>
<rect x="3" y="4" width="6" height="2" fill="#8ab0d8"/>
<path d="M7 12 L16 1" stroke="#d8c868" stroke-width="1.6"/>
</svg>
<svg class="a" style="left:195px;top:708px" width="15" height="16" viewBox="0 0 15 16">
<ellipse cx="7.3" cy="8" rx="6.3" ry="7.8" fill="#b06818"/>
<ellipse cx="7.3" cy="7.5" rx="4.5" ry="5.8" fill="#d89030"/>
<ellipse cx="7.3" cy="7.5" rx="2.5" ry="3.2" fill="#b87020"/>
<ellipse cx="6.5" cy="4" rx="1.6" ry="1.2" fill="#f8d890"/>
</svg>
<svg class="a" style="left:220px;top:708px" width="15" height="16" viewBox="0 0 15 16">
<path d="M0.5 0.5 H9.5 L14 5 V15.5 H0.5Z" fill="#ece0b0" stroke="#c8b888" stroke-width="0.8"/>
<path d="M9.5 0.5 V5 H14" fill="#d8c890" stroke="#a89860" stroke-width="0.6"/>
<text x="0.3" y="11.8" font-family="Liberation Mono" font-size="8" fill="#111" letter-spacing="-0.5">Doc</text>
</svg>
<svg class="a" style="left:243px;top:708px" width="17" height="16" viewBox="0 0 17 16">
<rect x="0.5" y="1" width="11.5" height="14" fill="#fafafa" stroke="#c8c8c8" stroke-width="0.8"/>
<path d="M2 5 H4 M2 8 H4 M2 11 H4" stroke="#48a068" stroke-width="1"/>
<path d="M5 13 L14 3.5" stroke="#e8c040" stroke-width="2.8"/>
<circle cx="14.5" cy="3" r="1.8" fill="#e83030"/>
<path d="M4 14 L5.5 12" stroke="#5050a0" stroke-width="1.2"/>
</svg>
<svg class="a" style="left:266px;top:708px" width="17" height="16" viewBox="0 0 17 16">
<g fill="#8484e6">
<circle cx="8.5" cy="8" r="6"/>
<rect x="7.3" y="0.8" width="2.4" height="14.4"/>
<rect x="1.3" y="6.8" width="14.4" height="2.4"/>
<rect x="7.3" y="0.8" width="2.4" height="14.4" transform="rotate(45 8.5 8)"/>
<rect x="7.3" y="0.8" width="2.4" height="14.4" transform="rotate(-45 8.5 8)"/>
</g>
<ellipse cx="8.5" cy="8" rx="3" ry="3.6" fill="#e8e6f0"/>
</svg>
<svg class="a" style="left:290px;top:707px" width="18" height="18" viewBox="0 0 18 18">
<circle cx="9" cy="9" r="8" fill="#283f80"/>
<circle cx="9" cy="9" r="6.8" fill="none" stroke="#a8b8e0" stroke-width="0.8"/>
<circle cx="9" cy="9" r="6" fill="#2c4c98"/>
<path d="M6.3 6.8 Q6.5 4 9.2 4 Q12 4.2 11.8 6.6 Q11.6 8.2 9.5 9.2 L9.3 11" fill="none" stroke="#e8f0ff" stroke-width="1.8"/>
<circle cx="9.3" cy="13.3" r="1.1" fill="#e8f0ff"/>
</svg>

</body></html>
